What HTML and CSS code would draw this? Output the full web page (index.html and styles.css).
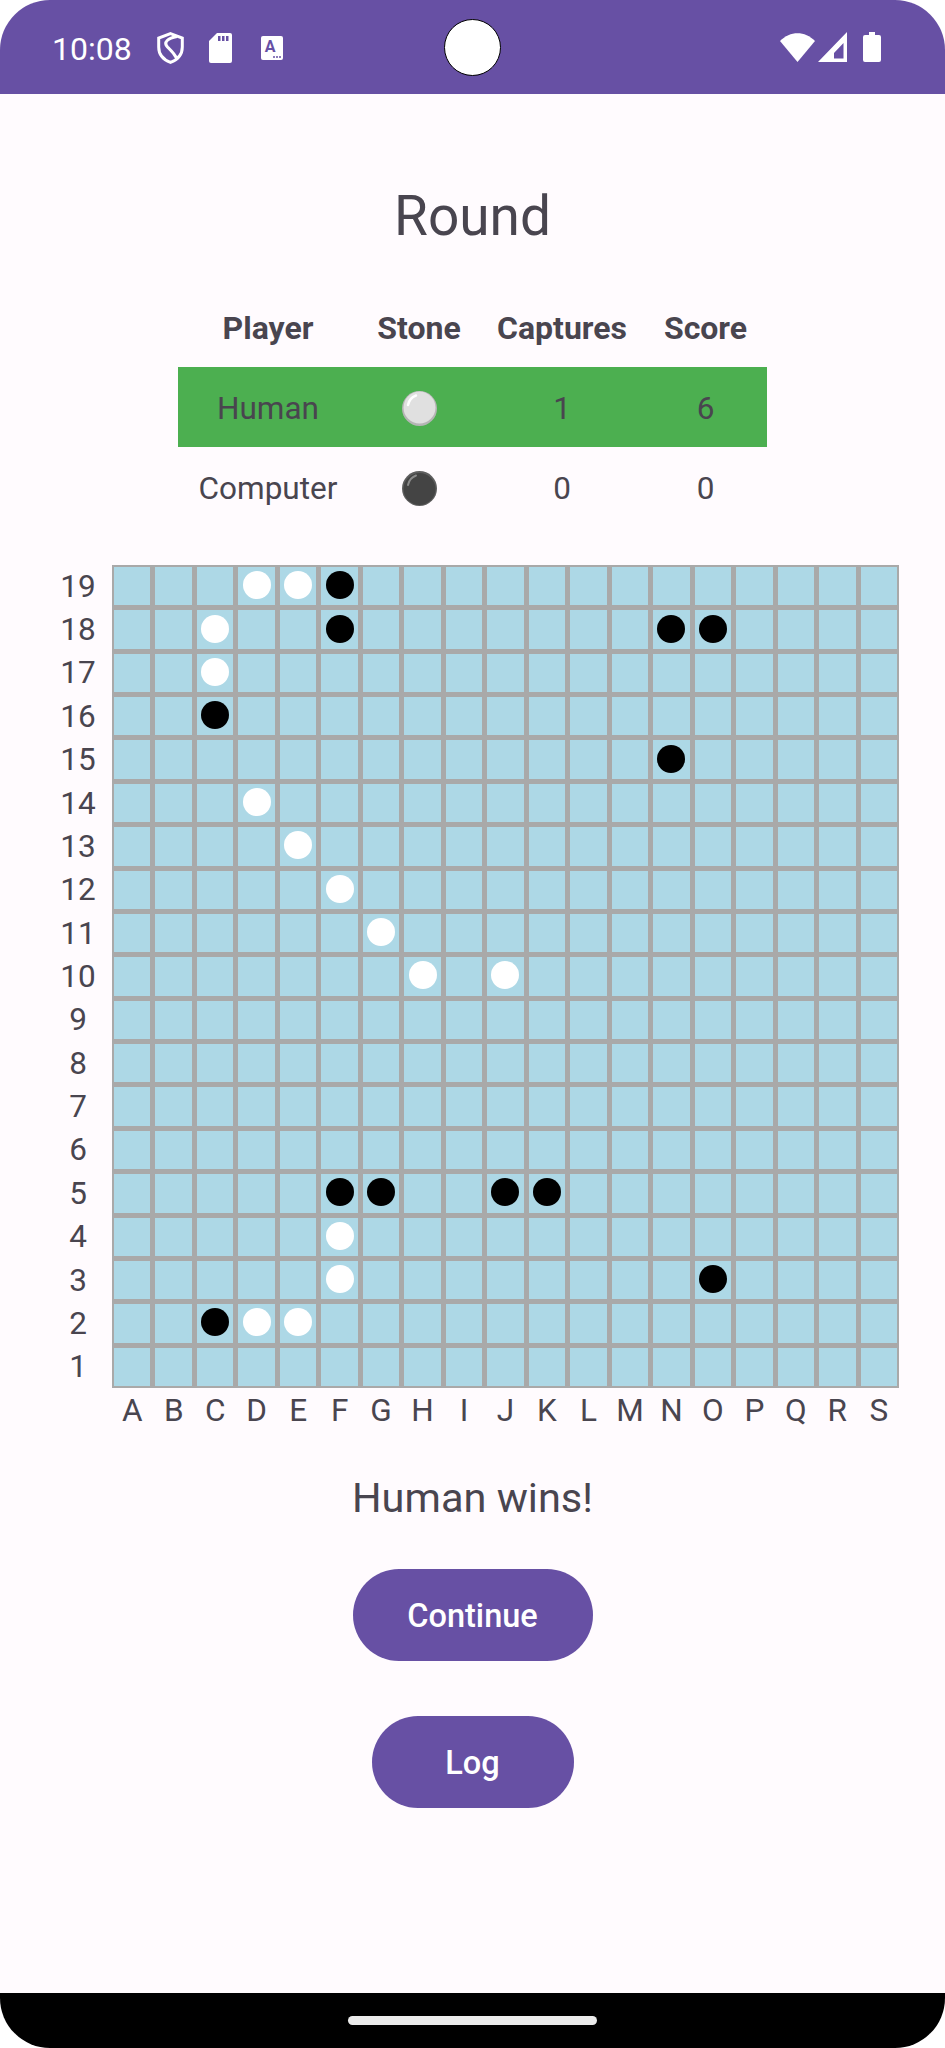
FILE: index.html
```html
<!DOCTYPE html>
<html lang="en">
<head>
  <meta charset="UTF-8">
  <title>Round</title>
  <link rel="stylesheet" href="styles.css">
</head>
<body>
<div class="screen">
  <!-- status bar -->
  <div class="status">
    <span class="time">10:08</span>
    <svg class="ic-shield" width="27" height="32" viewBox="0 0 27 32"><path d="M13.5 1.7 25.3 6v9c0 7.600-5 12.800-11.800 15.300C6.700 27.800 1.700 22.600 1.700 15V6Z" fill="none" stroke="#fff" stroke-width="3"/><path d="M20 4.500C11 6 6 10 10.500 15c3.500 3.500 6.500 6 9 11" fill="none" stroke="#fff" stroke-width="3"/></svg>
    <svg class="ic-sd" width="23" height="30" viewBox="0 0 23 30"><path d="M8 0H21a2 2 0 0 1 2 2V28a2 2 0 0 1-2 2H2a2 2 0 0 1-2-2V8Z" fill="#fff"/><path d="M9 3h2.500v5H9ZM13 3h2.500v5H13ZM17 3h2.500v5H17Z" fill="#6750a4"/></svg>
    <svg class="ic-a" width="22" height="24" viewBox="0 0 22 24"><rect width="22" height="24" rx="2" fill="#fff"/><text x="9" y="16" text-anchor="middle" class="ic-a-letter">A</text><circle cx="13" cy="21" r="1" fill="#6750a4"/><circle cx="16" cy="21" r="1" fill="#6750a4"/><circle cx="19" cy="21" r="1" fill="#6750a4"/></svg>
    <div class="status-right">
      <svg width="35" height="29" viewBox="0 0 35 29"><path d="M0 8C10-2.500 25-2.500 35 8L17.500 29Z" fill="#fff"/></svg>
      <svg class="ic-signal" width="29" height="30" viewBox="0 0 29 30"><path fill-rule="evenodd" d="M29 0V30H0ZM25.500 11 16 21V26.500H25.500Z" fill="#fff"/></svg>
      <svg class="ic-battery" width="18" height="30" viewBox="0 0 18 30"><path d="M6 0H12V3H16a2 2 0 0 1 2 2V28a2 2 0 0 1-2 2H2a2 2 0 0 1-2-2V5a2 2 0 0 1 2-2H6Z" fill="#fff"/></svg>
    </div>
  </div>
  <div class="camera"></div>

  <div class="main">
    <h1 class="title">Round</h1>

    <div class="scores">
      <div class="head">Player</div><div class="head">Stone</div><div class="head">Captures</div><div class="head">Score</div>
      <div class="winner">Human</div>
      <div class="winner"><svg width="35" height="35" viewBox="0 0 35 35"><circle cx="17.500" cy="17.500" r="17.500" fill="#b5b5b5"/><circle cx="17.500" cy="16.500" r="16" fill="#e0e0e0"/><path d="M6 14C7 9 10 6 14 4.500" fill="none" stroke="#fff" stroke-width="2.500" stroke-linecap="round"/></svg></div>
      <div class="winner">1</div>
      <div class="winner">6</div>
      <div>Computer</div>
      <div><svg width="35" height="35" viewBox="0 0 35 35"><circle cx="17.500" cy="17.500" r="17.500" fill="#5e5e5e"/><circle cx="17.500" cy="18" r="16" fill="#444"/><path d="M6 14C7 9 10 6 14 4.500" fill="none" stroke="#8a8a8a" stroke-width="2" stroke-linecap="round"/></svg></div>
      <div>0</div>
      <div>0</div>
    </div>

    <div class="board-row">
      <div class="row-labels">
        <span>19</span><span>18</span><span>17</span><span>16</span><span>15</span><span>14</span><span>13</span><span>12</span><span>11</span><span>10</span><span>9</span><span>8</span><span>7</span><span>6</span><span>5</span><span>4</span><span>3</span><span>2</span><span>1</span>
      </div>
      <div class="board">
        <!-- 19 -->
        <i></i><i></i><i></i><i class="w"></i><i class="w"></i><i class="b"></i><i></i><i></i><i></i><i></i><i></i><i></i><i></i><i></i><i></i><i></i><i></i><i></i><i></i>
        <!-- 18 -->
        <i></i><i></i><i class="w"></i><i></i><i></i><i class="b"></i><i></i><i></i><i></i><i></i><i></i><i></i><i></i><i class="b"></i><i class="b"></i><i></i><i></i><i></i><i></i>
        <!-- 17 -->
        <i></i><i></i><i class="w"></i><i></i><i></i><i></i><i></i><i></i><i></i><i></i><i></i><i></i><i></i><i></i><i></i><i></i><i></i><i></i><i></i>
        <!-- 16 -->
        <i></i><i></i><i class="b"></i><i></i><i></i><i></i><i></i><i></i><i></i><i></i><i></i><i></i><i></i><i></i><i></i><i></i><i></i><i></i><i></i>
        <!-- 15 -->
        <i></i><i></i><i></i><i></i><i></i><i></i><i></i><i></i><i></i><i></i><i></i><i></i><i></i><i class="b"></i><i></i><i></i><i></i><i></i><i></i>
        <!-- 14 -->
        <i></i><i></i><i></i><i class="w"></i><i></i><i></i><i></i><i></i><i></i><i></i><i></i><i></i><i></i><i></i><i></i><i></i><i></i><i></i><i></i>
        <!-- 13 -->
        <i></i><i></i><i></i><i></i><i class="w"></i><i></i><i></i><i></i><i></i><i></i><i></i><i></i><i></i><i></i><i></i><i></i><i></i><i></i><i></i>
        <!-- 12 -->
        <i></i><i></i><i></i><i></i><i></i><i class="w"></i><i></i><i></i><i></i><i></i><i></i><i></i><i></i><i></i><i></i><i></i><i></i><i></i><i></i>
        <!-- 11 -->
        <i></i><i></i><i></i><i></i><i></i><i></i><i class="w"></i><i></i><i></i><i></i><i></i><i></i><i></i><i></i><i></i><i></i><i></i><i></i><i></i>
        <!-- 10 -->
        <i></i><i></i><i></i><i></i><i></i><i></i><i></i><i class="w"></i><i></i><i class="w"></i><i></i><i></i><i></i><i></i><i></i><i></i><i></i><i></i><i></i>
        <!-- 9 -->
        <i></i><i></i><i></i><i></i><i></i><i></i><i></i><i></i><i></i><i></i><i></i><i></i><i></i><i></i><i></i><i></i><i></i><i></i><i></i>
        <!-- 8 -->
        <i></i><i></i><i></i><i></i><i></i><i></i><i></i><i></i><i></i><i></i><i></i><i></i><i></i><i></i><i></i><i></i><i></i><i></i><i></i>
        <!-- 7 -->
        <i></i><i></i><i></i><i></i><i></i><i></i><i></i><i></i><i></i><i></i><i></i><i></i><i></i><i></i><i></i><i></i><i></i><i></i><i></i>
        <!-- 6 -->
        <i></i><i></i><i></i><i></i><i></i><i></i><i></i><i></i><i></i><i></i><i></i><i></i><i></i><i></i><i></i><i></i><i></i><i></i><i></i>
        <!-- 5 -->
        <i></i><i></i><i></i><i></i><i></i><i class="b"></i><i class="b"></i><i></i><i></i><i class="b"></i><i class="b"></i><i></i><i></i><i></i><i></i><i></i><i></i><i></i><i></i>
        <!-- 4 -->
        <i></i><i></i><i></i><i></i><i></i><i class="w"></i><i></i><i></i><i></i><i></i><i></i><i></i><i></i><i></i><i></i><i></i><i></i><i></i><i></i>
        <!-- 3 -->
        <i></i><i></i><i></i><i></i><i></i><i class="w"></i><i></i><i></i><i></i><i></i><i></i><i></i><i></i><i></i><i class="b"></i><i></i><i></i><i></i><i></i>
        <!-- 2 -->
        <i></i><i></i><i class="b"></i><i class="w"></i><i class="w"></i><i></i><i></i><i></i><i></i><i></i><i></i><i></i><i></i><i></i><i></i><i></i><i></i><i></i><i></i>
        <!-- 1 -->
        <i></i><i></i><i></i><i></i><i></i><i></i><i></i><i></i><i></i><i></i><i></i><i></i><i></i><i></i><i></i><i></i><i></i><i></i><i></i>
      </div>
    </div>
    <div class="col-labels">
      <span>A</span><span>B</span><span>C</span><span>D</span><span>E</span><span>F</span><span>G</span><span>H</span><span>I</span><span>J</span><span>K</span><span>L</span><span>M</span><span>N</span><span>O</span><span>P</span><span>Q</span><span>R</span><span>S</span>
    </div>

    <div class="result">Human wins!</div>
    <button class="btn btn-continue">Continue</button>
    <button class="btn btn-log">Log</button>
  </div>

  <!-- nav bar -->
  <div class="nav"><div class="pill"></div></div>
</div>
</body>
</html>
```

FILE: styles.css
```css
* {
  padding: 0;
  margin: 0;
  box-sizing: border-box;
}

body {
  background: #fff;
  font-family: Roboto, "Liberation Sans", sans-serif;
  color: #49454f;
}

.screen {
  width: 945px;
  height: 2048px;
  border-radius: 50px;
  overflow: hidden;
  background: #fffbfe;
  display: flex;
  flex-direction: column;
  position: relative;
}

/* status bar */
.status {
  height: 94px;
  flex: none;
  background: #6750a4;
  display: flex;
  align-items: center;
  padding: 0 64px 0 52px;
  color: #fff;
}

.time {
  font-size: 32px;
  line-height: 36px;
  margin-right: 25px;
  margin-top: 4px;
}

.ic-shield {
  margin-right: 25px;
  margin-top: 1px;
}

.ic-sd {
  margin-right: 29px;
  margin-top: 1px;
}

.ic-a {
  margin-top: 2px;
}

.ic-a-letter {
  font-family: Roboto, sans-serif;
  font-size: 16px;
  font-weight: 700;
  fill: #6750a4;
}

.status-right {
  margin-left: auto;
  display: flex;
  align-items: center;
}

.ic-signal {
  margin-left: 3px;
}

.ic-battery {
  margin-left: 16px;
}

.camera {
  position: absolute;
  left: 444px;
  top: 19px;
  width: 57px;
  height: 57px;
  border-radius: 50%;
  background: #fff;
  border: 1.500px solid #000;
}

.main {
  flex: 1;
  display: flex;
  flex-direction: column;
  align-items: center;
}

.title {
  margin-top: 83px;
  font-size: 55px;
  line-height: 78px;
  font-weight: 400;
}

/* score table */
.scores {
  margin-top: 32px;
  display: grid;
  grid-template-columns: 180px 122px 164px 123px;
  grid-auto-rows: 80px;
  font-size: 31.500px;
}

.scores div {
  display: flex;
  align-items: center;
  justify-content: center;
  padding-top: 2px;
}

.scores .head {
  font-size: 32px;
  font-weight: 700;
}

.scores .winner {
  background: #4caf50;
}

/* board */
.board-row {
  margin-top: 38px;
  align-self: flex-start;
  display: flex;
  padding-left: 56px;
}

.row-labels {
  width: 44px;
  margin-right: 12px;
  padding: 2px 0;
  display: grid;
  grid-template-rows: repeat(19, 1fr);
  row-gap: 5px;
  font-size: 31.500px;
  text-align: center;
}

.row-labels span {
  display: flex;
  align-items: center;
  justify-content: center;
}

.board {
  width: 787px;
  height: 823px;
  padding: 2px;
  background: #a9a9a9;
  display: grid;
  grid-template-columns: repeat(19, 1fr);
  grid-template-rows: repeat(19, 1fr);
  gap: 5px;
}

.board i {
  background: #add8e6;
  display: flex;
  align-items: center;
  justify-content: center;
}

.board .w::after,
.board .b::after {
  content: "";
  width: 28px;
  height: 28px;
  margin-top: -2px;
  border-radius: 50%;
}

.board .w::after {
  background: #fff;
}

.board .b::after {
  background: #000;
}

.col-labels {
  align-self: flex-start;
  margin-left: 112px;
  width: 787px;
  height: 46px;
  padding: 0 2px;
  display: grid;
  grid-template-columns: repeat(19, 1fr);
  column-gap: 5px;
  font-size: 31.500px;
  line-height: 46px;
  text-align: center;
}

.result {
  margin-top: 34px;
  font-size: 41.500px;
  line-height: 60px;
}

.btn {
  display: block;
  height: 92px;
  padding-top: 2px;
  border: 0;
  border-radius: 46px;
  background: #6750a4;
  color: #fff;
  font-family: Roboto, sans-serif;
  font-size: 32.500px;
  font-weight: 500;
}

.btn-continue {
  width: 240px;
  margin-top: 41px;
}

.btn-log {
  width: 202px;
  margin-top: 55px;
}

/* nav bar */
.nav {
  height: 55px;
  flex: none;
  background: #000;
  display: flex;
  justify-content: center;
  padding-top: 23px;
}

.pill {
  width: 249px;
  height: 9px;
  border-radius: 5px;
  background: #ebebeb;
}
```
